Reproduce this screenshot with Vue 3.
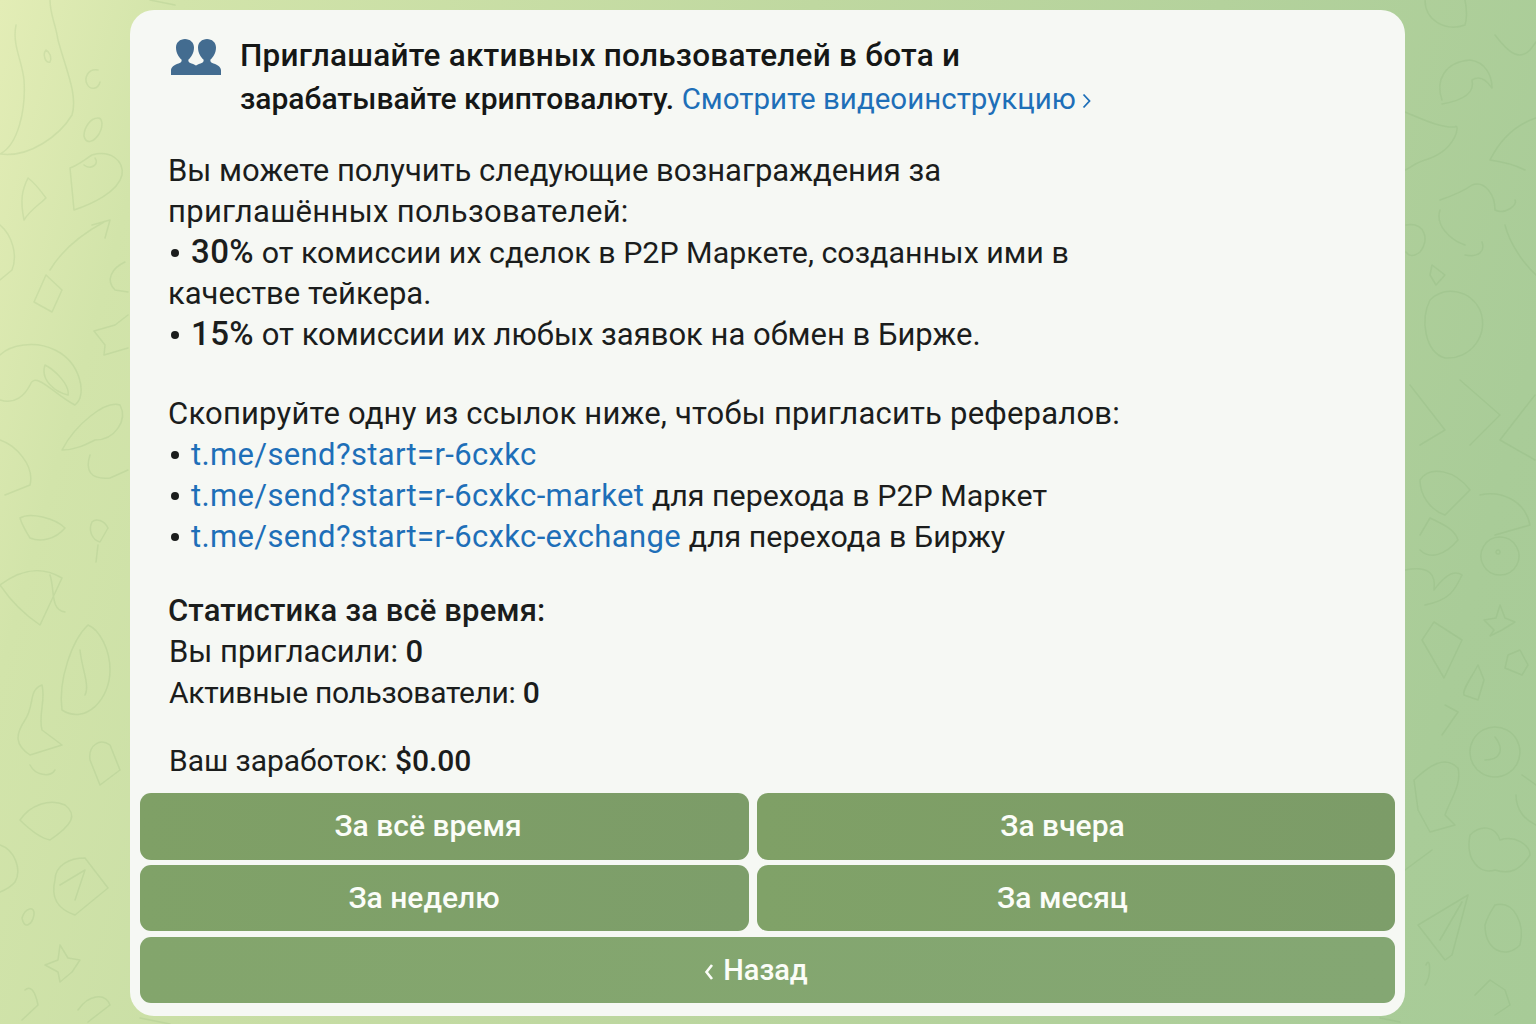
<template>
  <div class="page">
    <svg class="doodles" width="1536" height="1024" viewBox="0 0 1536 1024" fill="none">
      <path v-for="(d, i) in doodles" :key="i" :d="d" />
    </svg>

    <div class="card">
      <div class="content">
        <div class="intro">
          <svg class="people" viewBox="0 0 50 36" width="50" height="36">
            <path :d="person" />
            <path :d="person" transform="translate(22 0)" />
          </svg>
          <p class="intro-text">
            <span class="wide-line">Приглашайте активных пользователей в бота и</span><br />
            зарабатывайте криптовалюту.
            <a class="link video">Смотрите видеоинструкцию<svg class="chev" viewBox="0 0 9 16" width="9" height="16" fill="none"><path d="M1.500 1.500L7.500 8L1.500 14.500" /></svg></a>
          </p>
        </div>

        <p class="block rewards">
          Вы можете получить следующие вознаграждения за<br />
          <span class="loose">приглашённых пользователей:</span><br />
          <span class="dot"></span><b class="big">30%</b> <span class="narrow">от комиссии их сделок в P2P Маркете, созданных ими в</span><br />
          качестве тейкера.<br />
          <span class="dot"></span><b class="big">15%</b> от комиссии их любых заявок на обмен в Бирже.
        </p>

        <p class="block links">
          <span class="loose">Скопируйте одну из ссылок ниже, чтобы пригласить рефералов:</span><br />
          <span class="dot"></span><a class="link">t.me/send?start=r-6cxkc</a><br />
          <span class="dot"></span><a class="link">t.me/send?start=r-6cxkc-market</a> <span class="narrow">для перехода в P2P Маркет</span><br />
          <span class="dot"></span><a class="link">t.me/send?start=r-6cxkc-exchange</a> <span class="narrow">для перехода в Биржу</span>
        </p>

        <p class="block stats">
          <b class="stats-title">Статистика за всё время:</b><br />
          Вы пригласили: <b>0</b><br />
          <span class="tighter">Активные пользователи: <b>0</b></span>
        </p>

        <p class="block earned"><span class="tight">Ваш заработок: <b>$0.00</b></span></p>
      </div>

      <div class="buttons">
        <button v-for="b in buttons" :key="b.label" class="btn" :class="b.cls">
          <svg v-if="b.back" class="back" viewBox="0 0 10 18" width="10" height="18" fill="none"><path d="M8 2L2.500 9L8 16" /></svg>{{ b.label }}
        </button>
      </div>
    </div>
  </div>
</template>

<script setup>
const buttons = [
  { label: 'За всё время', cls: 'row-one shift-left' },
  { label: 'За вчера', cls: 'row-one shift-right' },
  { label: 'За неделю', cls: 'row-two shift-more' },
  { label: 'За месяц', cls: 'row-two shift-right' },
  { label: 'Назад', cls: 'wide', back: true }
]

const person = 'M0 36V31.500C0 28 3 26 7.500 24.500C10.500 23.500 11 22 10.500 20.500C8 18.500 5 14 5 8.500C5 3.500 9 0 14 0S23 3.500 23 8.500C23 14 20 18.500 17.500 20.500C17 22 17.500 23.500 20.500 24.500C25 26 28 28 28 31.500V36Z'

// фоновые рисунки, координаты прямо по картинке
const doodles = [
  // слева
  'M16 25C12 45 22 60 24 80C26 110 18 145 0 154C30 158 60 135 72 115C78 95 66 70 58 40C56 25 50 15 50 0',
  'M98 70C88 68 84 78 87 84C90 90 98 90 100 82',
  'M98 118C90 118 84 128 84 136C86 145 94 142 99 134C104 125 102 118 98 118',
  'M46 50C42 55 46 64 50 62C52 58 50 52 46 50',
  'M70 168L74 210C92 204 118 192 122 175C124 160 110 150 92 155C84 160 78 165 70 168M84 165C90 170 100 165 95 158',
  'M28 178C22 190 20 200 24 220C30 210 40 204 46 198C40 190 36 184 28 178',
  'M104 222C80 235 62 250 50 270M92 225L110 220L105 238M46 275L62 290L52 312L34 302Z',
  'M0 225C12 235 18 255 12 270L0 280',
  'M125 262C112 268 105 280 115 290L128 292',
  'M128 315L115 325L94 331L105 345L104 355L128 348',
  'M0 355C10 345 35 340 55 350C80 362 88 395 75 405C55 395 35 370 30 385C25 395 15 405 0 400M45 365C55 370 70 385 68 395C55 392 40 380 45 365',
  'M62 450C75 425 105 400 120 405C128 420 115 440 95 440C85 445 75 450 62 450',
  'M90 455C85 470 90 480 110 478L128 470',
  'M0 440C15 445 35 465 30 485L5 495',
  'M20 518C30 512 55 518 65 528C55 540 40 542 30 538C25 530 22 525 20 518',
  'M92 522C88 530 92 540 100 542L108 528C104 520 96 518 92 522M98 545L96 562',
  'M0 585C20 570 40 565 62 578L40 625C25 615 10 600 0 585M50 575C55 590 50 610 65 612',
  'M88 625C72 640 58 680 62 710C85 725 110 700 110 670C110 650 100 630 88 625M80 650C82 670 90 685 85 695',
  'M42 685C28 690 35 705 25 720C15 735 15 745 30 755L62 745L42 730C38 715 46 700 42 685M30 765C35 775 50 778 55 770',
  'M90 760C88 745 100 738 110 745L120 770L100 785L90 760Z',
  'M20 820C30 805 50 798 65 805C78 815 72 825 50 840C40 838 28 828 20 820Z',
  'M0 845C15 850 22 870 15 882C10 888 5 890 0 892',
  'M55 880C55 865 70 858 85 858L108 888L75 915C60 910 50 900 55 880ZM60 885L85 870L75 900',
  'M22 918C25 908 35 905 34 915C32 925 24 930 22 918Z',
  'M60 945L58 960L45 965L58 972L60 982L72 972L80 960L68 958Z',
  'M25 990C30 985 35 990 38 1005L22 1020',
  'M78 1010C88 995 105 992 110 1005L88 1022',
  // справа
  'M1442 100C1435 80 1445 62 1470 60C1485 62 1492 75 1492 88C1485 78 1478 76 1472 80C1475 92 1465 100 1442 104',
  'M1425 0C1425 20 1445 32 1465 25C1468 15 1466 5 1465 0',
  'M1495 35C1510 55 1520 60 1530 50L1536 42',
  'M1405 112C1420 118 1440 128 1455 127C1460 122 1458 150 1425 160C1415 163 1410 168 1405 170',
  'M1490 160C1500 140 1515 125 1536 118M1490 160C1505 162 1515 165 1525 170',
  'M1440 200C1455 195 1465 190 1472 185C1485 180 1495 195 1495 210C1505 215 1518 205 1515 200M1440 210C1435 225 1450 240 1465 245M1465 255C1480 258 1485 250 1482 242',
  'M1505 225C1510 245 1525 265 1536 275',
  'M1406 225C1425 222 1430 240 1420 252C1412 258 1408 255 1406 252',
  'M1432 265L1445 275L1436 285L1430 275Z',
  'M1430 300C1445 285 1470 290 1480 310C1490 335 1470 360 1445 358C1425 352 1420 320 1430 300Z',
  'M1410 385L1445 430L1420 445M1460 380L1500 415L1470 445',
  'M1500 440L1535 395M1500 440L1535 460',
  'M1420 480C1430 465 1455 470 1470 490L1445 515C1430 510 1420 495 1420 480Z',
  'M1480 495C1500 490 1525 500 1530 525L1495 535',
  'M1420 535L1430 518C1445 525 1455 530 1458 540C1445 555 1430 560 1420 550',
  'M1500 537a19 19 0 1 1-.1 0ZM1498 550a2 2 0 1 0 .1 0',
  'M1405 570C1430 565 1436 575 1434 590C1445 575 1455 570 1462 575C1455 590 1450 600 1425 605',
  'M1500 605L1496 618L1484 620L1494 630L1490 636L1502 630L1515 622L1505 618Z',
  'M1434 622L1462 640L1444 678L1422 640Z',
  'M1508 655L1520 650L1528 665L1522 675L1505 668Z',
  'M1478 665C1470 680 1462 690 1464 695L1478 700L1484 680Z',
  'M1445 705L1458 712L1442 735',
  'M1495 727a25 25 0 1 1-.1 0ZM1495 737C1505 750 1500 760 1485 760',
  'M1522 775L1536 785M1516 795C1516 810 1525 820 1536 825',
  'M1414 780C1430 765 1445 755 1458 768C1462 785 1450 800 1445 815L1455 825L1430 832L1418 810Z',
  'M1470 835C1480 825 1495 825 1500 840C1515 835 1530 845 1530 855C1520 870 1510 875 1495 870C1480 875 1465 860 1470 835Z',
  'M1405 870L1432 850',
  'M1418 925L1468 895L1452 955L1445 960L1418 925ZM1440 940L1462 902',
  'M1495 905C1515 900 1525 925 1520 945C1505 960 1485 950 1485 925C1488 915 1492 910 1495 905',
  'M1426 965C1430 955 1432 975 1425 985',
  'M1475 995L1490 980L1505 990L1510 1005L1495 1015',
  // сверху и снизу
  'M150 0L175 5M1380 1018L1400 1022',
  'M140 1018L170 1024'
]
</script>

<style scoped>
.page {
  position: relative;
  width: 1536px;
  height: 1024px;
  overflow: hidden;
  padding: 10px 131px 8px 130px;
  box-sizing: border-box;
  background: linear-gradient(105deg, #e3edb6 0%, #d2e4aa 10%, #bfd8a0 45%, #a9cc98 90%, #a7cb97 100%);
  font-family: Roboto, "Liberation Sans", sans-serif;
  color: #1b1d1c;
}

.doodles {
  position: absolute;
  top: 0;
  left: 0;
  stroke: #6d9a5f;
  stroke-opacity: 0.13;
  stroke-width: 1.5;
  stroke-linecap: round;
  stroke-linejoin: round;
}

.card {
  position: relative;
  height: 100%;
  display: flex;
  flex-direction: column;
  justify-content: space-between;
  background: #f6f8f4;
  border-radius: 24px;
  padding: 0 10px 13px;
  box-sizing: border-box;
}

.content {
  padding: 24px 0 0 28px;
  font-size: 31px;
  line-height: 41px;
}

.intro {
  display: flex;
  align-items: flex-start;
  gap: 19px;
}

.people {
  flex: none;
  margin: 5px 0 0 3px;
  fill: #436c90;
}

.intro-text {
  margin: 0;
  font-size: 30px;
  font-weight: 500;
  line-height: 43px;
  color: #151716;
}

.wide-line {
  font-size: 31.5px;
  letter-spacing: 0.25px;
  line-height: 1;
}

.block {
  margin: 0;
}

.rewards {
  margin-top: 30px;
}

.links {
  margin-top: 38px;
}

.stats {
  margin-top: 33px;
  padding-left: 1px;
}

.earned {
  margin-top: 27px;
  padding-left: 1px;
}

b {
  font-weight: 500;
}

.big {
  font-size: 33px;
  line-height: 1;
  letter-spacing: 0.4px;
}

.dot {
  display: inline-block;
  width: 8px;
  height: 8px;
  margin: 0 12px 0 3px;
  border-radius: 50%;
  background: #1b1d1c;
  vertical-align: 6px;
}

.link {
  color: #1e6fb8;
  letter-spacing: 0.35px;
}

.link.video {
  font-size: 29.5px;
  font-weight: 400;
  letter-spacing: 0;
  line-height: 1;
}

.chev {
  margin-left: 6px;
  stroke: #1e6fb8;
  stroke-width: 1.8;
}

.loose {
  letter-spacing: 0.3px;
}

.links .loose {
  letter-spacing: 0.2px;
}

.narrow {
  font-size: 30.4px;
  line-height: 1;
}

.stats-title {
  letter-spacing: 0.12px;
  margin-left: -1px;
}

.tight {
  font-size: 30px;
  letter-spacing: -0.05px;
  line-height: 1;
}

.tighter {
  font-size: 30px;
  letter-spacing: -0.3px;
  line-height: 1;
}

.buttons {
  display: grid;
  grid-template-columns: 609px 638px;
  gap: 0 8px;
}

.btn {
  height: 66px;
  padding: 0 0 2px;
  border: none;
  border-radius: 11px;
  background: linear-gradient(90deg, #7fa066, #7c9c68);
  color: #fbfdf8;
  font-family: inherit;
  font-size: 30px;
  font-weight: 500;
}

.row-one {
  height: 67px;
  margin-bottom: 5px;
}

.row-two {
  margin-bottom: 6px;
  background: linear-gradient(90deg, #80a268, #7d9e6a);
}

.wide {
  grid-column: 1 / 3;
  padding: 0 23px 0 0;
  font-size: 29px;
  background: linear-gradient(90deg, #83a56c, #84a773);
}

.shift-left {
  padding-right: 33px;
}

.shift-more {
  padding-right: 41px;
}

.shift-right {
  padding-right: 27px;
}

.back {
  margin-right: 9px;
  vertical-align: -1px;
  stroke: #fbfdf8;
  stroke-width: 2.6;
}
</style>

<style>
html,
body {
  margin: 0;
}
</style>
